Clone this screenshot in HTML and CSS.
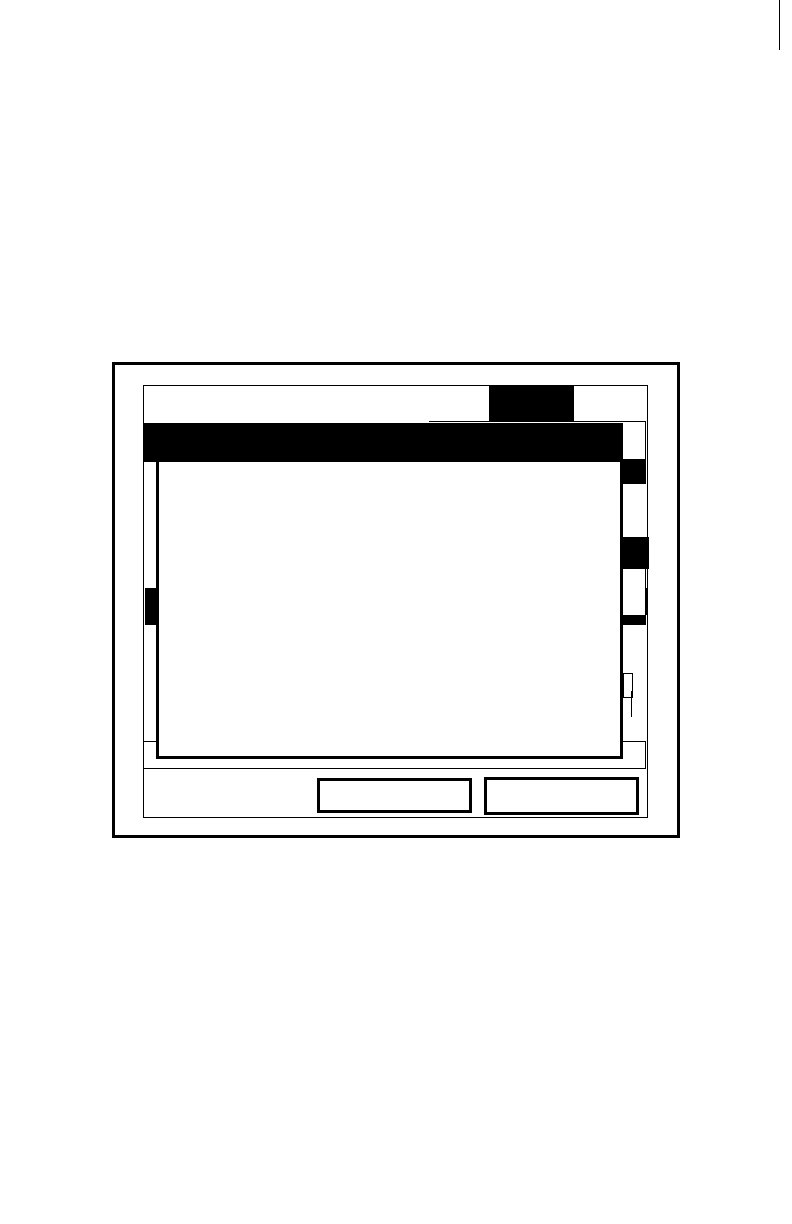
FILE: index.html
```html
<!DOCTYPE html>
<html>
<head>
<meta charset="utf-8">
<link rel="stylesheet" href="styles.css">
</head>
<body>
<div class="page">
  <div class="topline"></div>
  <div class="frame">
    <div class="screen">
      <div class="header"><div class="tab"></div></div>
      <div class="main">
        <div class="left-col"><div class="left-hl"></div></div>
        <div class="panel">
          <div class="p-head"></div>
          <div class="p-row-black r1"></div>
          <div class="p-gap g1"></div>
          <div class="p-row-black r2"></div>
          <div class="p-gap g2"></div>
          <div class="p-gap g3"></div>
          <div class="p-row-black r3"></div>
          <div class="p-small"><div class="p-tick"></div></div>
          <div class="p-stem"></div>
        </div>
      </div>
      <div class="status"></div>
      <div class="buttons">
        <div class="btn btn-left"></div>
        <div class="btn btn-right"></div>
      </div>
      <div class="dialog">
        <div class="dlg-title"></div>
        <div class="dlg-body"></div>
      </div>
    </div>
  </div>
</div>
</body>
</html>
```
FILE: styles.css
```css
* { box-sizing: border-box; }
html, body { margin: 0; padding: 0; background: #fff; }
body { font-family: "Liberation Sans", Arial, sans-serif; width: 792px; height: 1224px; overflow: hidden; }
.page { display: flex; flex-direction: column; }
.topline { margin-left: 779px; width: 1px; height: 50px; background: #000; }
.frame {
  margin-top: 312px; margin-left: 112px;
  width: 568px; height: 476px;
  border: 3px solid #000;
  padding: 20px 0 0 28px;
}
.screen {
  position: relative;
  width: 505px; height: 433px;
  border: 1px solid #000;
  display: flex; flex-direction: column;
}
.header { height: 35px; display: flex; }
.tab { margin-left: 345px; width: 85px; height: 35px; background: #000; }
.main { height: 320px; display: flex; align-items: flex-start; }
.left-col { width: 12px; padding-left: 1px; }
.left-hl { margin-top: 167px; width: 11px; height: 37px; background: #000; }
.panel { margin-left: 273px; width: 217px; display: flex; flex-direction: column; }
.p-head { height: 38px; border-top: 1px solid #000; border-right: 1px solid #000; }
.p-row-black { background: #000; }
.r1 { height: 25px; }
.g1 { height: 53px; }
.r2 { height: 32px; width: 220px; }
.g2 { height: 19px; border-right: 1px solid #000; }
.g3 { height: 27px; border-right: 2px solid #000; width: 218px; }
.r3 { height: 10px; }
.p-small {
  position: relative;
  margin-top: 48px; margin-left: 194px;
  width: 10px; height: 25px;
  border: 1px solid #000;
}
.p-tick { position: absolute; right: -1px; bottom: -1px; width: 2px; height: 7px; background: #000; }
.p-stem { margin-left: 202px; width: 1px; height: 19px; background: #000; }
.status {
  width: 502px; height: 28px;
  border-top: 1px solid #000; border-bottom: 1px solid #000; border-right: 1px solid #000;
}
.buttons { display: flex; align-items: flex-start; height: 48px; }
.btn { width: 155px; border: 3px solid #000; }
.btn-left { margin-left: 173px; margin-top: 9px; height: 35px; }
.btn-right { margin-left: 12px; margin-top: 8px; height: 38px; }
.dialog { position: absolute; left: -1px; top: 37px; width: 480px; display: flex; flex-direction: column; }
.dlg-title { height: 39px; background: #000; }
.dlg-body {
  margin-left: 13px; width: 467px; height: 297px;
  background: #fff;
  border: 3px solid #000; border-top: 0;
}
```
